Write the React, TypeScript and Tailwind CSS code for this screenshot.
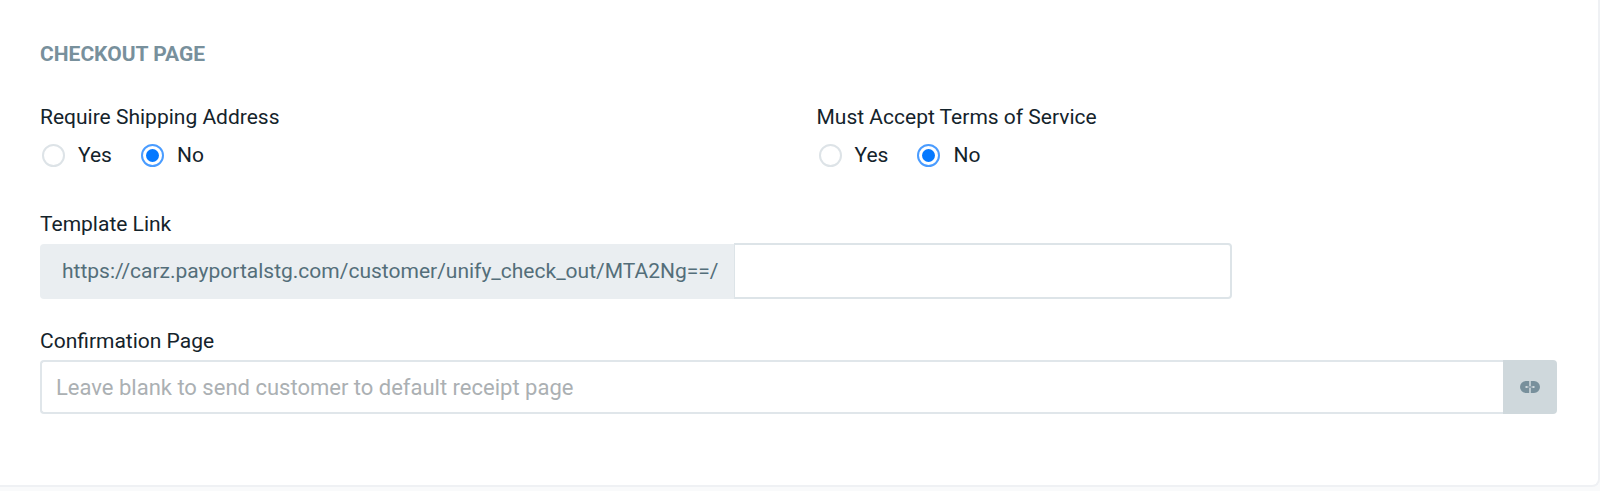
import { useId, useState } from "react";

function YesNo({ label, name }: { label: string; name: string }) {
  const [value, setValue] = useState("No");
  const id = useId();
  return (
    <fieldset>
      <legend className="text-[21px] leading-8">{label}</legend>
      <div className="mt-2 flex gap-[29px] px-0.5">
        {["Yes", "No"].map((option) => (
          <label key={option} htmlFor={id + option} className="flex items-center gap-[13px] text-[21px] leading-7">
            <input
              id={id + option}
              type="radio"
              name={name}
              checked={value === option}
              onChange={() => setValue(option)}
              className="grid size-[23px] appearance-none place-items-center rounded-full border-2 border-[#dde3e7] bg-white before:size-[13px] before:rounded-full checked:border-[#4a9cff] checked:before:bg-[#0579ff]"
            />
            {option}
          </label>
        ))}
      </div>
    </fieldset>
  );
}

function LinkIcon() {
  return (
    <svg viewBox="0 0 20 12" className="h-3 w-5" aria-hidden="true">
      <path fill="#78909c" d="M9.2 0H6a6 6 0 0 0 0 12h3.200V7H5.500V5h3.700zM10.800 0H14a6 6 0 0 1 0 12h-3.200V7h3.700V5h-3.700z" />
      <path fill="#78909c" d="M7.500 5.300h5v1.400h-5z" />
    </svg>
  );
}

export default function App() {
  return (
    <div className="bg-[#f9fafb] pb-1 font-['Roboto',sans-serif] text-[#14232b]">
      <form className="rounded-br-lg border-r-2 border-b-2 border-[#eff1f4] bg-white pt-10 pr-[41px] pb-[71px] pl-10">
        <h2 className="text-[21px] leading-7 font-bold text-[#78909c]">CHECKOUT PAGE</h2>
        <div className="mt-[33px] grid grid-cols-2 gap-9">
          <YesNo label="Require Shipping Address" name="shipping" />
          <YesNo label="Must Accept Terms of Service" name="terms" />
        </div>
        <div className="mt-[39px]">
          <label htmlFor="template" className="block text-[21px] leading-8">Template Link</label>
          <div className="mt-[3px] flex h-14 w-[78.6%]">
            <span className="mt-px flex items-center rounded-l bg-[#eaeef1] pr-4 pl-[22px] text-[21px] text-[#546e7a]">https://carz.payportalstg.com/customer/unify_check_out/MTA2Ng==/</span>
            <input id="template" type="text" className="min-w-0 flex-1 rounded-r border-2 border-l border-[#dde4e8] px-4 text-[21px]" />
          </div>
        </div>
        <div className="mt-[26px]">
          <label htmlFor="confirmation" className="block text-[21px] leading-8">Confirmation Page</label>
          <div className="mt-[3px] flex h-[54px]">
            <input
              id="confirmation"
              type="text"
              placeholder="Leave blank to send customer to default receipt page"
              className="min-w-0 flex-1 rounded-l border-2 border-r-0 border-[#e0e6ea] px-[14px] text-[22px] placeholder:text-[#abb0b3]"
            />
            <button type="button" aria-label="Insert link" className="flex w-[54px] items-center justify-center rounded-r bg-[#cfd8dc]">
              <LinkIcon />
            </button>
          </div>
        </div>
      </form>
    </div>
  );
}
